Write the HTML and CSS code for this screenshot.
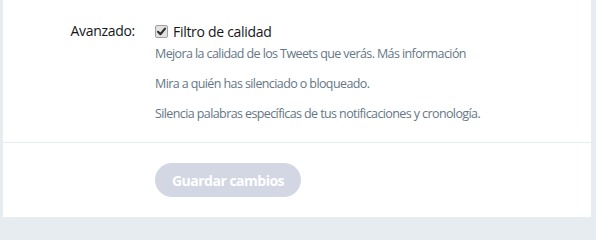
FILE: index.html
```html
<!DOCTYPE html>
<html lang="es">
<head>
<meta charset="utf-8">
<link rel="stylesheet" href="styles.css">
</head>
<body>
<div class="panel">
  <div class="settings">
    <div class="row">
      <div class="label">Avanzado:</div>
      <div class="control">
        <label class="check">
          <span class="box"><svg viewBox="0 0 13 13" width="13" height="13"><path d="M3 6.8 L5.4 9.2 L10 3.6" fill="none" stroke="#333" stroke-width="2.2" stroke-linecap="round" stroke-linejoin="round"/></svg></span>
          <span>Filtro de calidad</span>
        </label>
        <p class="desc">Mejora la calidad de los Tweets que verás. <a href="#">Más información</a></p>
        <p class="desc">Mira a quién has silenciado o bloqueado.</p>
        <p class="desc">Silencia palabras específicas de tus notificaciones y cronología.</p>
      </div>
    </div>
  </div>
  <div class="actions">
    <button class="save" disabled>Guardar cambios</button>
  </div>
</div>
</body>
</html>
```
FILE: styles.css
```css
html, body {
  margin: 0;
  padding: 0;
  background: #e6ecf0;
  height: 220px;
  overflow: hidden;
}
body {
  font-family: "Open Sans", "Noto Sans", sans-serif;
  color: #14171a;
}
.panel {
  background: #fff;
  margin: 0 5px 0 3px;
  height: 217px;
  display: flex;
  flex-direction: column;
}
.settings {
  padding-top: 20px;
  padding-bottom: 18px;
  border-bottom: 1px solid #e6ecf0;
}
.row {
  display: grid;
  grid-template-columns: 132px 1fr;
  column-gap: 20px;
}
.label {
  text-align: right;
  font-size: 14px;
  letter-spacing: -0.3px;
  line-height: 22px;
}
.control {
  display: flex;
  flex-direction: column;
}
.check {
  display: flex;
  align-items: center;
  height: 22px;
  font-size: 14px;
  letter-spacing: -0.3px;
}
.box {
  box-sizing: border-box;
  width: 13px;
  height: 13px;
  margin-right: 5px;
  border: 1px solid #a0a0a0;
  border-radius: 2px;
  background: #e2e2e2;
  display: flex;
  align-items: center;
  justify-content: center;
  overflow: hidden;
}
.box svg {
  flex: none;
}
.desc {
  margin: 10px 0 0;
  font-size: 12.5px;
  letter-spacing: -0.6px;
  line-height: 20px;
  color: #657786;
}
.check + .desc {
  margin-top: 2px;
}
.desc a {
  color: #657786;
  text-decoration: none;
}
.actions {
  padding: 20px 0 0 152px;
}
.save {
  height: 34px;
  width: 146px;
  border: none;
  border-radius: 17px;
  background: #d3d6e3;
  color: #fff;
  font-family: "Open Sans", sans-serif;
  font-weight: 700;
  font-size: 14px;
  letter-spacing: -0.5px;
  padding: 0;
}
```
